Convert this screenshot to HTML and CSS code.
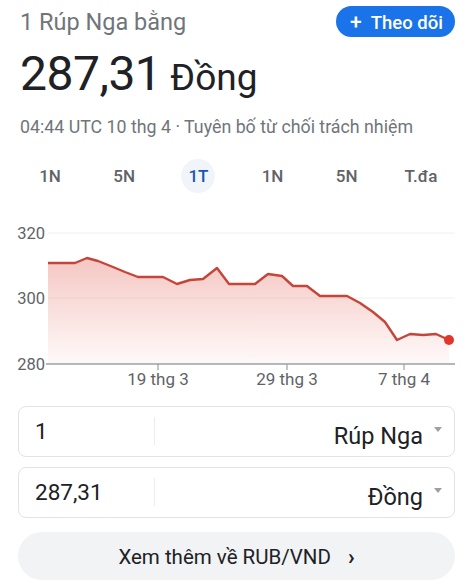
FILE: index.html
```html
<!DOCTYPE html>
<html lang="vi">
<head>
    <meta charset="UTF-8">
    <title>Rúp Nga sang Đồng</title>
    <link rel="stylesheet" href="styles.css">
</head>

<body>
    <div class="card">
        <div class="header">
            <div class="subtitle">1 Rúp Nga bằng</div>
            <button class="follow-btn"><span class="plus">+</span> Theo dõi</button>
        </div>

        <div class="value">
            <span class="amount">287,31</span>
            <span class="currency">Đồng</span>
        </div>

        <div class="meta">04:44 UTC 10 thg 4 · Tuyên bố từ chối trách nhiệm</div>

        <div class="tabs">
            <div class="tab">1N</div>
            <div class="tab">5N</div>
            <div class="tab active">1T</div>
            <div class="tab">1N</div>
            <div class="tab">5N</div>
            <div class="tab">T.đa</div>
        </div>

        <!-- biểu đồ 1 tháng -->
        <svg class="chart" viewBox="8 222 447 170" width="447" height="170">
            <defs>
                <linearGradient id="fillGrad" x1="0" y1="0" x2="0" y2="1">
                    <stop offset="0%" stop-color="#e57368" stop-opacity="0.4"/>
                    <stop offset="100%" stop-color="#e57368" stop-opacity="0.04"/>
                </linearGradient>
            </defs>

            <line class="grid" x1="48" y1="234" x2="455" y2="234"/>
            <line class="grid" x1="48" y1="299" x2="455" y2="299"/>

            <text class="ylabel" x="45" y="240">320</text>
            <text class="ylabel" x="45" y="305">300</text>
            <text class="ylabel" x="45" y="371">280</text>

            <polygon fill="url(#fillGrad)" points="48,264 75,264 87,259 98,262 113,268 125,273 138,278 163,278 177,285 190,281 203,280 217,269 229,285 255,285 268,275 282,277 293,287 307,287 320,297 347,297 360,304 373,313 385,323 397,341 410,335 423,336 436,335 449,341 449,365 48,365"/>
            <polyline class="line" points="48,264 75,264 87,259 98,262 113,268 125,273 138,278 163,278 177,285 190,281 203,280 217,269 229,285 255,285 268,275 282,277 293,287 307,287 320,297 347,297 360,304 373,313 385,323 397,341 410,335 423,336 436,335 449,341"/>
            <circle class="dot" cx="449" cy="341" r="5"/>

            <line class="axis" x1="46" y1="365" x2="455" y2="365"/>
            <line class="tick" x1="158" y1="365" x2="158" y2="371"/>
            <line class="tick" x1="287" y1="365" x2="287" y2="371"/>
            <line class="tick" x1="404" y1="365" x2="404" y2="371"/>

            <text class="xlabel" x="158" y="386">19 thg 3</text>
            <text class="xlabel" x="287" y="386">29 thg 3</text>
            <text class="xlabel" x="404" y="386">7 thg 4</text>
        </svg>

        <div class="converter">
            <div class="conv-row">
                <div class="conv-input">1</div>
                <div class="conv-select">
                    <span>Rúp Nga</span>
                    <span class="arrow"></span>
                </div>
            </div>
            <div class="conv-row">
                <div class="conv-input">287,31</div>
                <div class="conv-select">
                    <span>Đồng</span>
                    <span class="arrow"></span>
                </div>
            </div>
        </div>

        <button class="more-btn">Xem thêm về RUB/VND <span class="chev">›</span></button>
    </div>
</body>
</html>
```

FILE: styles.css
```css
body {
    margin: 0;
    font-family: Roboto, "Liberation Sans", sans-serif;
    background: #fff;
    color: #202124;
}

.card {
    padding: 0 18px 0 20px;
}

.header {
    display: flex;
    justify-content: space-between;
    align-items: center;
    padding-top: 6px;
    height: 31px;
}

.subtitle {
    font-size: 23.5px;
    color: #70757a;
    margin-top: 1px;
}

.follow-btn {
    height: 31px;
    padding: 0 12px 0 14px;
    border: none;
    border-radius: 16px;
    background: #1a73e8;
    color: #fff;
    font-family: inherit;
    font-size: 18.5px;
    font-weight: 500;
}

.follow-btn .plus {
    font-size: 21px;
    margin-right: 5px;
}

.value {
    margin-top: 8px;
    height: 54px;
    display: flex;
    align-items: baseline;
}

.amount {
    font-size: 48px;
    color: #202124;
    letter-spacing: -0.5px;
}

.currency {
    font-size: 37px;
    margin-left: 9px;
    color: #202124;
}

.meta {
    margin-top: 17px;
    font-size: 17.8px;
    color: #70757a;
}

.tabs {
    display: grid;
    grid-template-columns: repeat(6, 1fr);
    margin: 22px -3px 0 -7px;
}

.tab {
    justify-self: center;
    width: 34px;
    height: 34px;
    line-height: 34px;
    text-align: center;
    border-radius: 50%;
    font-size: 17px;
    font-weight: 500;
    color: #5f6368;
    white-space: nowrap;
}

.tab.active {
    background: #f1f4f9;
    color: #1a56b0;
}

.chart {
    display: block;
    margin: 28px 0 0 -12px;
}

.chart .grid {
    stroke: #f0f0f0;
    stroke-width: 1;
}

.chart .axis {
    stroke: #9aa0a6;
    stroke-width: 1.5;
}

.chart .tick {
    stroke: #9aa0a6;
    stroke-width: 1.2;
}

.chart .ylabel {
    font-size: 16.5px;
    fill: #5f6368;
    text-anchor: end;
}

.chart .xlabel {
    font-size: 17px;
    fill: #5f6368;
    text-anchor: middle;
}

.chart .line {
    fill: none;
    stroke: #c5453a;
    stroke-width: 2.4;
    stroke-linejoin: round;
}

.chart .dot {
    fill: #e0362c;
}

.converter {
    margin: 15px 0 0 -2px;
    display: flex;
    flex-direction: column;
    gap: 10px;
}

.conv-row {
    height: 49px;
    border: 1px solid #e3e3e3;
    border-radius: 8px;
    display: flex;
}

.conv-input {
    width: 120px;
    padding-left: 16px;
    font-size: 22.5px;
    line-height: 49px;
    position: relative;
}

.conv-input::after {
    content: "";
    position: absolute;
    right: 0;
    top: 10px;
    height: 28px;
    border-right: 1px solid #ececec;
}

.conv-select {
    flex: 1;
    display: flex;
    justify-content: flex-end;
    align-items: flex-end;
    padding: 0 12px 8px 0;
    font-size: 23.5px;
    line-height: 1;
}

.conv-select .arrow {
    align-self: flex-start;
    margin: 20px 0 0 11px;
    width: 0;
    height: 0;
    border-left: 4px solid transparent;
    border-right: 4px solid transparent;
    border-top: 5px solid #9aa0a6;
}

.more-btn {
    display: block;
    width: 437px;
    height: 48px;
    margin: 14px 0 0 -2px;
    padding: 0;
    border: none;
    border-radius: 24px;
    background: #f1f3f4;
    font-family: inherit;
    font-size: 20.5px;
    color: #202124;
}

.more-btn .chev {
    font-size: 22px;
    font-weight: 700;
    margin-left: 12px;
}
```
